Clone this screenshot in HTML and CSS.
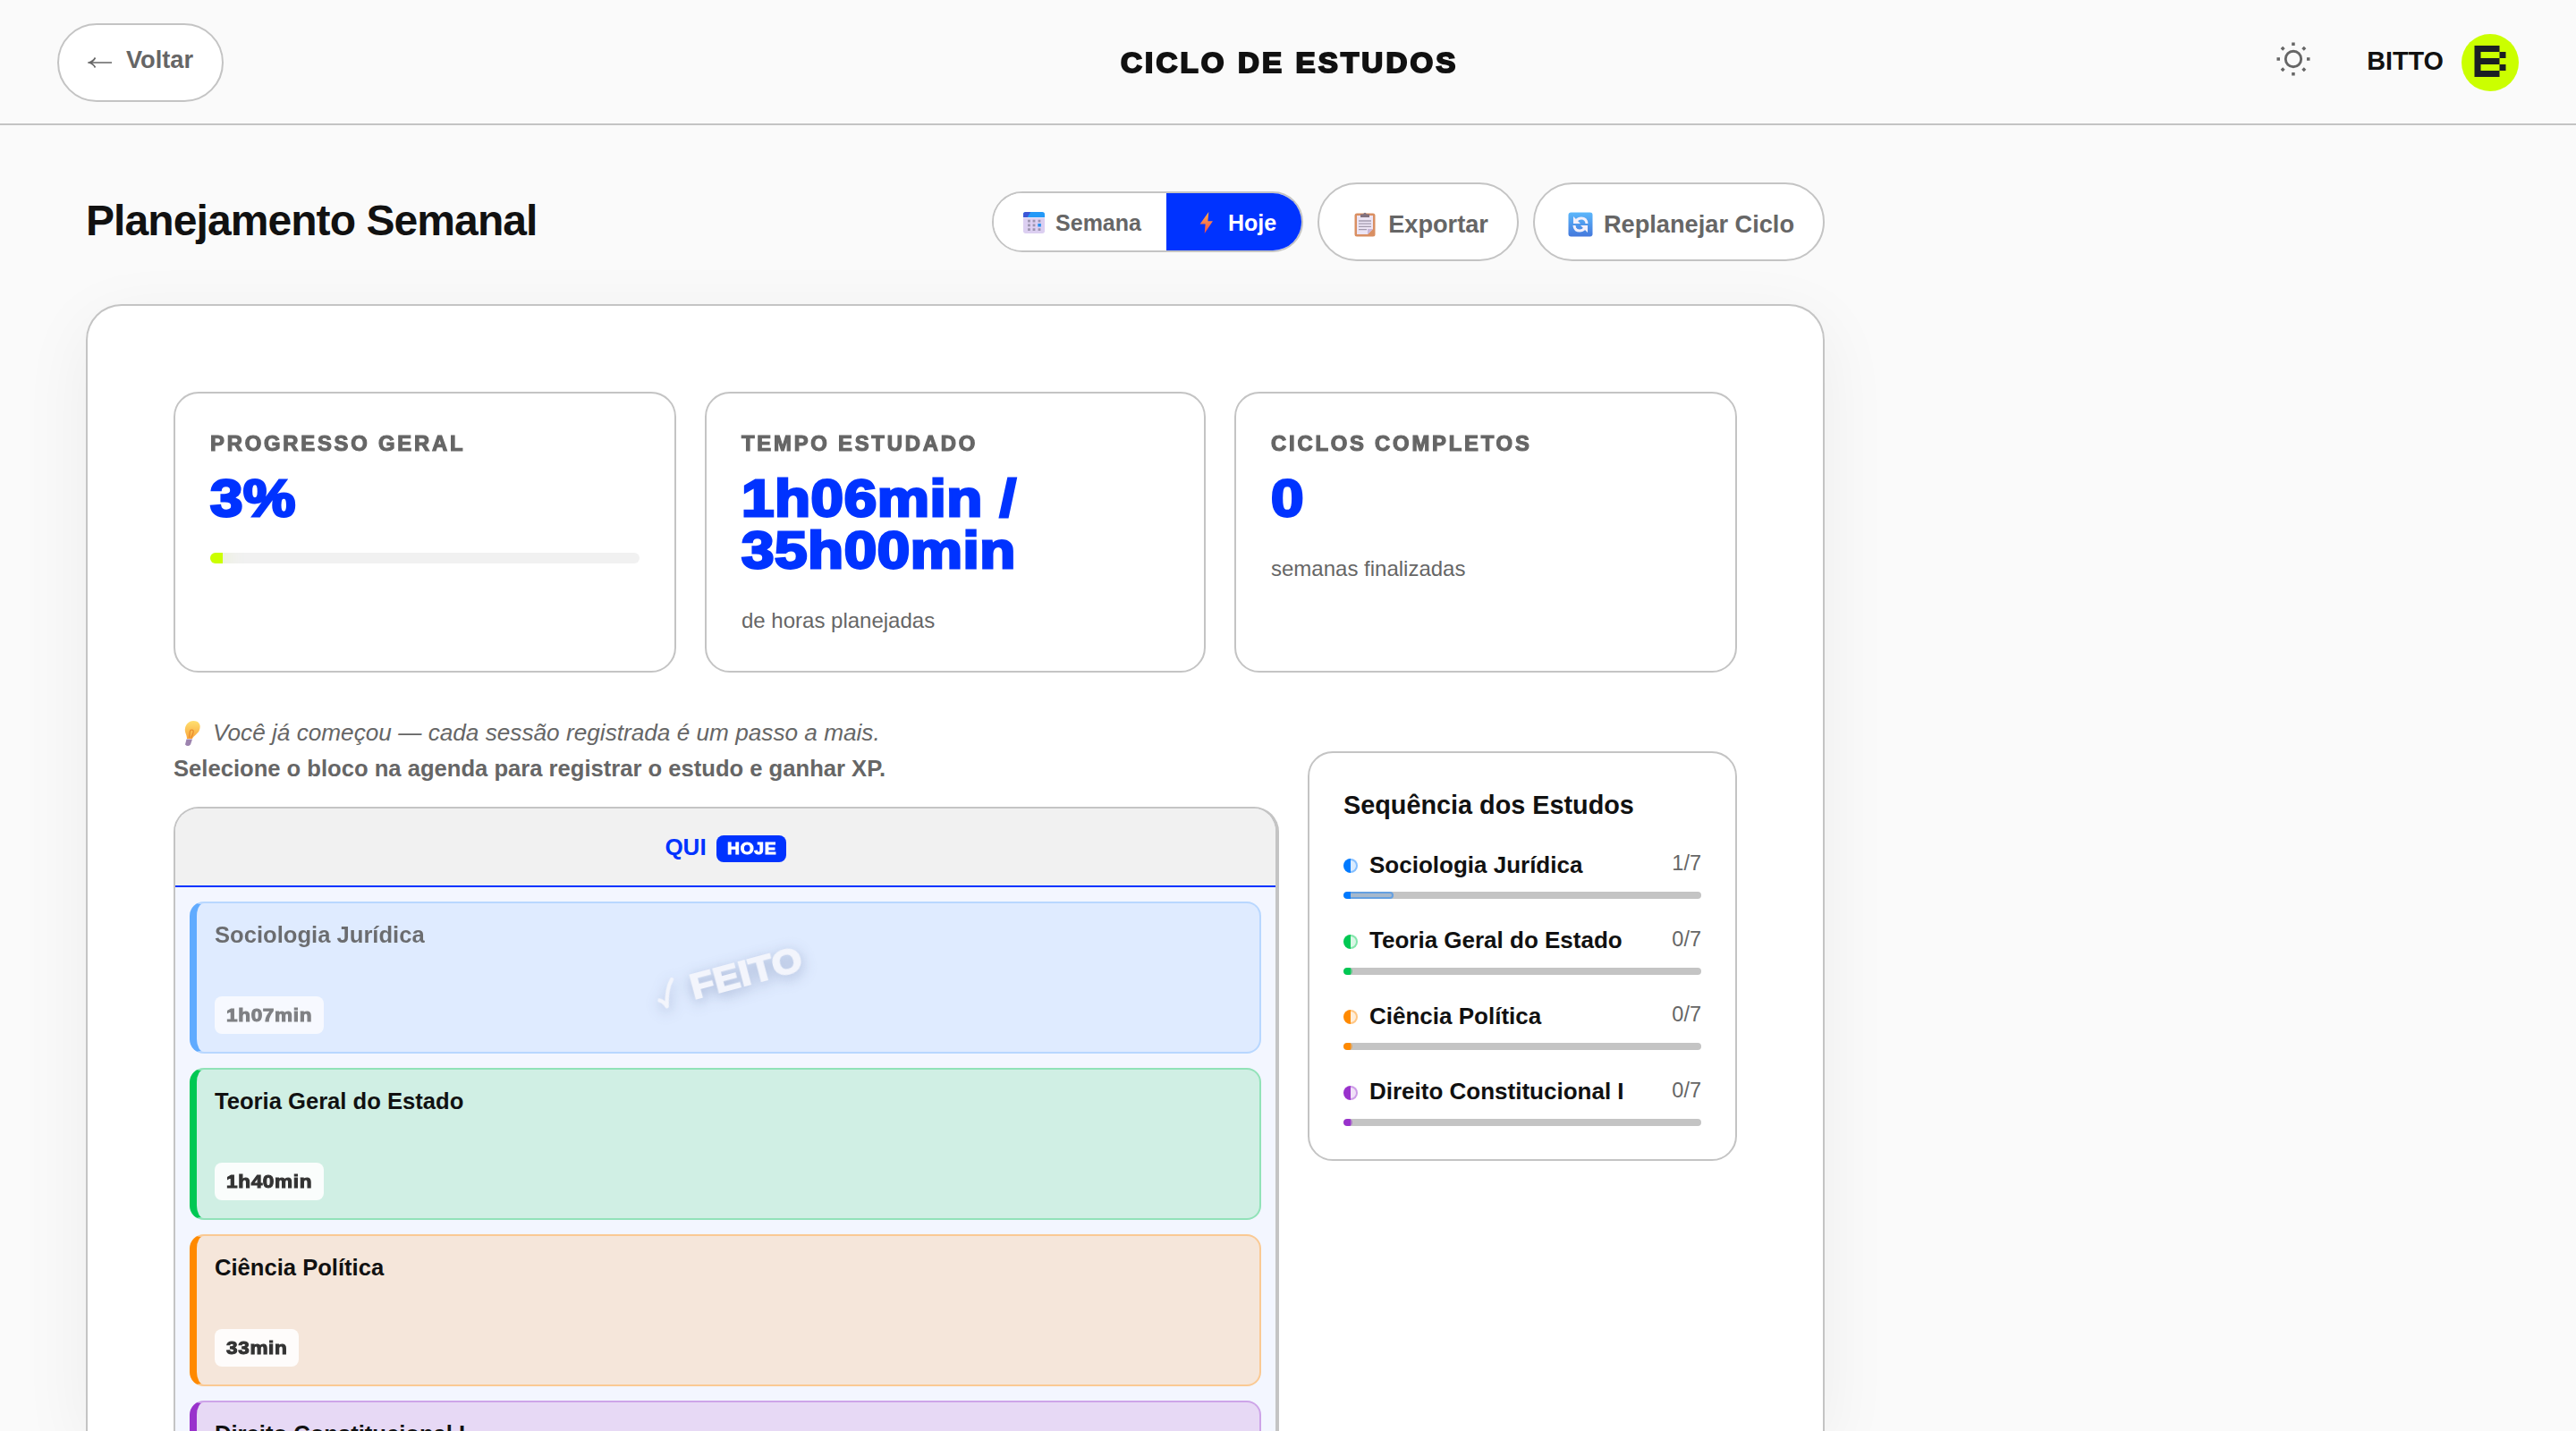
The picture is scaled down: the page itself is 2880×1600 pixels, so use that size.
FILE: index.html
```html
<!DOCTYPE html>
<html lang="pt-BR">
<head>
<meta charset="utf-8">
<title>Ciclo de Estudos</title>
<link rel="stylesheet" href="styles.css">
</head>
<body>
<header class="topbar">
  <button class="pill back"><svg class="arrow" viewBox="0 0 28 16"><path d="M2 8h25M8.500 2.500Q6.500 6.500 1.500 8Q6.500 9.500 8.500 13.500" fill="none" stroke="#666" stroke-width="1.700"/></svg><span>Voltar</span></button>
  <h1 class="brand black">CICLO DE ESTUDOS</h1>
  <div class="user">
    <svg class="sun" viewBox="0 0 38 38"><circle cx="19" cy="19" r="8.700" fill="none" stroke="#666" stroke-width="2.900"/><g fill="#666"><path d="M17.200.500h3.500v3.500h-3.500zM17.200 34h3.500v3.500h-3.500zM.500 17.200H4v3.500H.500zM34 17.200h3.500v3.500H34z"/><path d="M7.200 4.700l2.500 2.500-2.500 2.500-2.500-2.500zM30.800 4.700l2.500 2.500-2.500 2.500-2.500-2.500zM7.200 28.300l2.500 2.500-2.500 2.500-2.500-2.500zM30.800 28.300l2.500 2.500-2.500 2.500-2.500-2.500z"/></g></svg>
    <span class="name">BITTO</span>
    <svg class="avatar" viewBox="0 0 64 64"><circle cx="32" cy="32" r="32" fill="#cbff00"/><path d="M14.500 13H42.500V20H49.500V27H42.500V34H49.500V41H42.500V48H14.500ZM21.500 20V27H42.500V20ZM21.500 34V41H42.500V34Z" fill="#1b1f24" fill-rule="evenodd"/></svg>
  </div>
</header>
<main class="page">
  <div class="title-row">
    <h2>Planejamento Semanal</h2>
    <div class="actions">
      <div class="toggle">
        <button class="seg"><svg class="emoji" viewBox="0 0 26 26"><path d="M0 7h26v16q0 3-3 3H3q-3 0-3-3z" fill="#dccff1"/><path d="M0 6.500V3q0-3 3-3h20q3 0 3 3v3.500z" fill="#2499f7"/><path d="M0 6.500V3q0-3 3-3h6L5 6.500z" fill="#3c56d6"/><g fill="#9c94b0"><path d="M5.500 9.500h3v3h-3zM11.500 9.500h3v3h-3zM18 9.500h3v3h-3zM5.500 14.500h3v3h-3zM11.500 14.500h3v3h-3zM5.500 19.700h3v3h-3zM11.500 19.700h3v3h-3zM18 19.700h3v3h-3z"/></g><path d="M17.700 14.200h3.800v3.800h-3.800z" fill="#2490f0"/></svg>Semana</button>
        <button class="seg on"><svg class="emoji" viewBox="0 0 26 26"><defs><linearGradient id="z" x2="0" y2="1"><stop stop-color="#ffb04a"/><stop offset="1" stop-color="#f2484c"/></linearGradient></defs><path d="M15.500 0L5 14.500h6.500L10.500 26 20.500 11h-6z" fill="url(#z)"/></svg>Hoje</button>
      </div>
      <button class="pill"><svg class="emoji big" viewBox="0 0 28 28"><rect x="2.500" y="1.500" width="23" height="26" rx="2.500" fill="#d98f62"/><path d="M5 4h18v15l-6 6H5z" fill="#ece4f4"/><path d="M17 25v-6h6z" fill="#c9b8da"/><path d="M9 6V2.500h3Q14-1 16 2.500h3V6z" fill="#81717f"/><path d="M7 10h14M7 13.200h14M7 16.400h14M7 19.600h9" stroke="#a29aad" stroke-width="1.300"/></svg>Exportar</button>
      <button class="pill"><svg class="emoji big" viewBox="0 0 28 28"><defs><linearGradient id="b" x2="0" y2="1"><stop stop-color="#5bb7fb"/><stop offset="1" stop-color="#4478dc"/></linearGradient></defs><rect x=".500" y=".500" width="27" height="27" rx="3" fill="url(#b)"/><path d="M21 13Q20.500 7 15 7 11.500 7 9.500 9.500M7 15Q7.500 21 13 21 16.500 21 18.500 18.500" fill="none" stroke="#f3f0fb" stroke-width="3"/><path d="M6 5v8h8zM22 23v-8h-8z" fill="#f3f0fb"/></svg>Replanejar Ciclo</button>
    </div>
  </div>
  <section class="panel">
    <div class="stats">
      <article class="stat"><h3 class="black">PROGRESSO GERAL</h3><p class="value black">3%</p><div class="meter"><i style="width:3%"></i></div></article>
      <article class="stat"><h3 class="black">TEMPO ESTUDADO</h3><p class="value black">1h06min /<br>35h00min</p><p class="note">de horas planejadas</p></article>
      <article class="stat"><h3 class="black">CICLOS COMPLETOS</h3><p class="value black">0</p><p class="note">semanas finalizadas</p></article>
    </div>
    <div class="columns">
      <div class="agenda">
        <p class="tip"><svg class="bulb" viewBox="0 0 26 28"><defs><linearGradient id="y" x2="0" y2="1"><stop stop-color="#ffe070"/><stop offset="1" stop-color="#f9a63c"/></linearGradient></defs><path d="M16 0c7 0 9 5 7 10-1 4-6 6-8 10H9C9 15 6 13 7 8c1-5 5-8 9-8z" fill="url(#y)"/><path d="M11.500 19c1-6 0-9 3-9s1.500 5-1 9" fill="none" stroke="#e88a2c" stroke-width="1.200"/><path d="M8.500 20.500h6.500l-2 6q-3 3-6 0z" fill="#9c83ae"/></svg><em>Você já começou — cada sessão registrada é um passo a mais.</em></p>
        <p class="hint">Selecione o bloco na agenda para registrar o estudo e ganhar XP.</p>
        <div class="day">
          <div class="day-head"><span>QUI</span><b class="badge"><span class="black">HOJE</span></b></div>
          <div class="blocks">
            <article class="block blue done"><div class="body"><h4>Sociologia Jurídica</h4><div class="time"><span class="black">1h07min</span></div></div><div class="stamp"><svg viewBox="0 0 30 40"><path d="M3 25q5 3 7 10Q15 13 25 3" fill="none" stroke="#f3f5fc" stroke-width="5" stroke-linecap="round" stroke-linejoin="round"/></svg><span class="black">FEITO</span></div></article>
            <article class="block green"><div class="body"><h4>Teoria Geral do Estado</h4><div class="time"><span class="black">1h40min</span></div></div></article>
            <article class="block orange"><div class="body"><h4>Ciência Política</h4><div class="time short"><span class="black">33min</span></div></div></article>
            <article class="block purple"><div class="body"><h4>Direito Constitucional I</h4></div></article>
          </div>
        </div>
      </div>
      <aside class="sequence">
        <h3>Sequência dos Estudos</h3>
        <div class="item blue"><div class="line"><i class="dot"></i><b>Sociologia Jurídica</b><span>1/7</span></div><div class="track"><i style="width:56px"></i></div></div>
        <div class="item green"><div class="line"><i class="dot"></i><b>Teoria Geral do Estado</b><span>0/7</span></div><div class="track"><i style="width:10px"></i></div></div>
        <div class="item orange"><div class="line"><i class="dot"></i><b>Ciência Política</b><span>0/7</span></div><div class="track"><i style="width:10px"></i></div></div>
        <div class="item purple"><div class="line"><i class="dot"></i><b>Direito Constitucional I</b><span>0/7</span></div><div class="track"><i style="width:10px"></i></div></div>
      </aside>
    </div>
  </section>
</main>
</body>
</html>
```
FILE: styles.css
```css
* { box-sizing: border-box; margin: 0; padding: 0; }
html, body { height: 1600px; overflow: hidden; }
body { background: #fafafa; color: #111; font-family: "Liberation Sans", Arial, sans-serif; display: flex; flex-direction: column; }
button { font: inherit; }
svg { flex: none; display: block; }
/* Heavy display weight: bold face, stroked and widened */
.black { display: block; font-weight: 900; -webkit-text-stroke: .05em currentColor; transform: scaleX(1.1); transform-origin: left center; white-space: nowrap; }
.topbar { flex: none; height: 140px; border-bottom: 2px solid #c4c4c4; display: grid; grid-template-columns: 1fr auto 1fr; align-items: center; padding: 2px 64px 0; }
.pill { height: 88px; border: 2px solid #c4c4c4; border-radius: 44px; background: #fff; color: #666; font-size: 27.200px; font-weight: 700; display: flex; align-items: center; }
.back { width: 186px; padding: 0 0 6px 32px; gap: 15px; }
.arrow { width: 28px; height: 16px; margin-top: 5px; }
.brand { font-size: 31.500px; letter-spacing: 3px; line-height: 40px; margin-right: -3px; transform: scaleX(1.050); transform-origin: center; -webkit-text-stroke-width: .065em; }
.user { justify-self: end; display: flex; align-items: center; }
.sun { width: 38px; height: 38px; margin: -8px 63px 0 0; }
.name { font-size: 28.800px; font-weight: 700; margin: -4px 20px 0 0; }
.avatar { width: 64px; height: 64px; }
.page { flex: 1; min-height: 0; padding: 64px 0 0 96px; width: 2040px; display: flex; flex-direction: column; }
.title-row { flex: none; display: flex; justify-content: space-between; align-items: center; height: 88px; }
.title-row h2 { font-size: 48px; letter-spacing: -.920px; margin-top: -3px; }
.actions { display: flex; align-items: center; gap: 16px; }
.actions .pill { padding: 5px 32px 0 37px; gap: 12px; }
.toggle { display: flex; height: 68px; border: 2px solid #c4c4c4; border-radius: 34px; overflow: hidden; background: #fff; }
.seg { border: 0; background: #fff; color: #666; font-size: 25px; font-weight: 700; display: flex; align-items: center; gap: 12px; padding: 2px 28px 0 33px; }
.seg.on { background: #0033ff; color: #fff; padding-left: 33px; }
.emoji { width: 24px; height: 24px; }
.emoji.big { width: 28px; height: 28px; }
.panel { flex: 1; min-height: 0; margin-top: 48px; background: #fff; border: 2px solid #c4c4c4; border-bottom: 0; border-radius: 40px 40px 0 0; padding: 96px 96px 0; box-shadow: 0 20px 80px rgba(0, 0, 0, .06); display: flex; flex-direction: column; }
.stats { display: grid; grid-template-columns: 562px 560px 562px; justify-content: space-between; }
.stat { height: 314px; border: 2px solid #c4c4c4; border-radius: 28px; padding: 41px 39px 0; }
.stat h3 { color: #666; font-size: 23px; line-height: 30px; letter-spacing: 2.700px; transform: scaleX(1.035); }
.value { margin-top: 17px; color: #0033ff; font-size: 58px; line-height: 58px; letter-spacing: .500px; transform: scaleX(1.130); }
.note { margin-top: 36px; color: #666; font-size: 24px; line-height: 28px; }
.meter { margin-top: 32px; height: 12px; border-radius: 6px; background: #f1f1f1; overflow: hidden; }
.meter i { display: block; height: 12px; background: #cbff00; box-shadow: 0 0 24px rgba(203, 255, 0, .4); }
.columns { flex: 1; min-height: 0; display: grid; grid-template: minmax(0, 1fr) / 1236px 480px; justify-content: space-between; padding-top: 48px; }
.agenda { display: flex; flex-direction: column; min-height: 0; }
.tip { flex: none; display: flex; align-items: center; height: 39px; font-size: 26.200px; color: #666; padding-left: 6px; }
.bulb { width: 26px; height: 28px; margin-right: 12px; }
.hint { font-size: 25.600px; line-height: 40px; font-weight: 700; color: #666; }
.day { flex: 1; min-height: 0; margin-top: 23px; border: 2px solid #c4c4c4; border-right-width: 4px; border-bottom: 0; border-radius: 28px 28px 0 0; overflow: hidden; background: #f3f6ff; }
.day-head { height: 88px; background: #f1f1f1; border-bottom: 2px solid #0033ff; display: flex; justify-content: center; align-items: center; gap: 11px; color: #0033ff; font-size: 26px; font-weight: 700; }
.badge { width: 78px; background: #0033ff; color: #fff; font-size: 17.600px; letter-spacing: .600px; height: 30px; border-radius: 8px; line-height: 31px; padding-left: 12px; margin-top: 4px; }
.blocks { padding: 16px; display: grid; gap: 16px; }
.block { position: relative; height: 170px; }
.body { height: 170px; border: 2px solid var(--line); border-left: 8px solid var(--c); border-radius: 16px; background: var(--bg); padding: 19px 20px 0; }
.block h4 { font-size: 25.600px; line-height: 32px; }
.time { width: 122px; margin-top: 53px; height: 42px; line-height: 41px; padding-left: 13px; border-radius: 8px; background: rgba(255, 255, 255, .88); color: #333; font-size: 20.500px; letter-spacing: .600px; }
.time.short { width: 94px; }
.blue { --c: #007aff; }
.green { --c: #00c853; --bg: #d0efe4; --line: #91e2b8; }
.orange { --c: #ff8a00; --bg: #f5e6da; --line: #fac993; }
.purple { --c: #9932cc; --bg: #e7d9f5; --line: #cda4e8; }
.block.blue { --bg: #d2e4ff; --line: #91c3ff; }
.done .body { opacity: .6; }
.stamp { position: absolute; left: 519px; top: 61px; width: 170px; display: flex; align-items: center; gap: 14px; color: #f3f5fc; font-size: 39px; letter-spacing: .500px; line-height: 48px; transform: rotate(-15deg); filter: drop-shadow(0 4px 8px rgba(30, 50, 110, .3)); }
.stamp svg { width: 26px; height: 36px; }
.sequence { margin-top: 40px; height: 458px; border: 2px solid #c4c4c4; border-radius: 28px; padding: 40px 38px 0; }
.sequence h3 { font-size: 28.800px; line-height: 36px; margin-bottom: 25px; }
.item { height: 84.500px; }
.line { height: 48px; display: flex; align-items: center; }
.line b { font-size: 26px; margin-left: 13px; }
.line span { margin: -3px 0 0 auto; color: #666; font-size: 23.500px; }
.dot { width: 16px; height: 16px; border-radius: 50%; margin-top: 2px; border: 2px solid color-mix(in srgb, var(--c) 40%, transparent); background: linear-gradient(90deg, var(--c) 50%, color-mix(in srgb, var(--c) 15%, transparent) 50%) border-box; }
.track { height: 8px; margin-top: 6px; border-radius: 4px; background: #c4c4c4; overflow: hidden; }
.track i { display: block; height: 8px; border-radius: 4px; border: 2px solid color-mix(in srgb, var(--c) 40%, transparent); background: linear-gradient(90deg, var(--c) 8px, color-mix(in srgb, var(--c) 15%, transparent) 8px) border-box; }
```
